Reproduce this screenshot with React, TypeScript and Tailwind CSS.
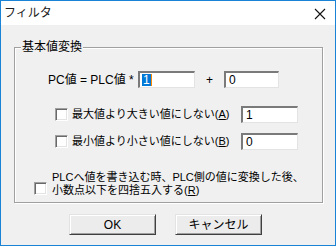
import React from 'react';

const font = "font-['Liberation_Sans','Noto_Sans_CJK_JP',sans-serif]";

// sunken edit box, classic Win32 look
function Edit({ value, width, selected }: { value: string; width: string; selected?: boolean }) {
  return (
    <div
      className={`${width} h-[17px] bg-white border-t-2 border-l-2 border-b border-r border-t-[#7a7a7a] border-l-[#7a7a7a] border-b-[#e3e3e3] border-r-[#e3e3e3] flex items-center pl-[2px] text-[12px] leading-none`}
    >
      {selected ? (
        <span className="bg-[#0078d7] text-white px-[1px] border-r border-r-[#ff8a00]">{value}</span>
      ) : (
        <span className="pl-[1px]">{value}</span>
      )}
    </div>
  );
}

function Check({ className = '' }: { className?: string }) {
  return (
    <div
      className={`w-[13px] h-[13px] shrink-0 bg-white border border-t-[#a0a0a0] border-l-[#a0a0a0] border-b-white border-r-white shadow-[inset_1px_1px_0_#696969,inset_-1px_-1px_0_#e3e3e3] ${className}`}
    />
  );
}

function Button({ label }: { label: string }) {
  return (
    <button className="w-[87px] h-[21px] bg-[#ececec] border border-t-[#e3e3e3] border-l-[#e3e3e3] border-b-[#404040] border-r-[#404040] shadow-[inset_1px_1px_0_#fff,inset_-1px_-1px_0_#a0a0a0] text-[12px] leading-none text-black">
      {label}
    </button>
  );
}

export default function App() {
  return (
    <div className={`w-[336px] h-[246px] border border-[#1a83d6] bg-[#f0f0f0] flex flex-col text-black ${font}`}>
      {/* title bar */}
      <div className="h-[24px] bg-white flex items-center justify-between pl-[3px] pr-[9px] shrink-0">
        <span className="text-[12px] text-[#202020]">フィルタ</span>
        <svg width="12" height="12" viewBox="0 0 12 12" className="mt-[1px]">
          <path d="M1 1L11 11M11 1L1 11" stroke="#111" strokeWidth="1.1" />
        </svg>
      </div>

      {/* group box */}
      <div className="relative ml-[13px] mt-[22px] w-[309px] h-[156px] border border-[#a0a0a0] shadow-[inset_1px_1px_0_#fff,1px_1px_0_#fff] flex flex-col">
        <span className="absolute left-[6px] top-[-7px] px-[1px] bg-[#f0f0f0] text-[12px] leading-[12px]">基本値変換</span>

        <div className="mt-[23px] pl-[33px] flex items-center h-[17px]">
          <span className="w-[90px] text-[12px] leading-none">PC値 = PLC値 *</span>
          <Edit value="1" width="w-[57px]" selected />
          <span className="w-[29px] text-center text-[12px] leading-none">+</span>
          <Edit value="0" width="w-[55px]" />
        </div>

        <div className="mt-[18px] pl-[40px] flex items-center h-[17px]">
          <Check />
          <span className="ml-[4px] w-[169px] text-[11px] leading-none whitespace-nowrap">
            最大値より大きい値にしない(<span className="underline">A</span>)
          </span>
          <Edit value="1" width="w-[57px]" />
        </div>

        <div className="mt-[10px] pl-[40px] flex items-center h-[17px]">
          <Check />
          <span className="ml-[4px] w-[169px] text-[11px] leading-none whitespace-nowrap">
            最小値より小さい値にしない(<span className="underline">B</span>)
          </span>
          <Edit value="0" width="w-[57px]" />
        </div>

        <div className="mt-[21px] pl-[19px] flex items-start">
          <Check className="mt-[11px]" />
          <div className="ml-[5px] text-[11px] leading-[13px] whitespace-nowrap">
            <div>PLCへ値を書き込む時、PLC側の値に変換した後、</div>
            <div>
              小数点以下を四捨五入する(<span className="underline">R</span>)
            </div>
          </div>
        </div>
      </div>

      {/* buttons */}
      <div className="mt-[11px] pl-[68px] flex gap-[19px]">
        <Button label="OK" />
        <Button label="キャンセル" />
      </div>
    </div>
  );
}
